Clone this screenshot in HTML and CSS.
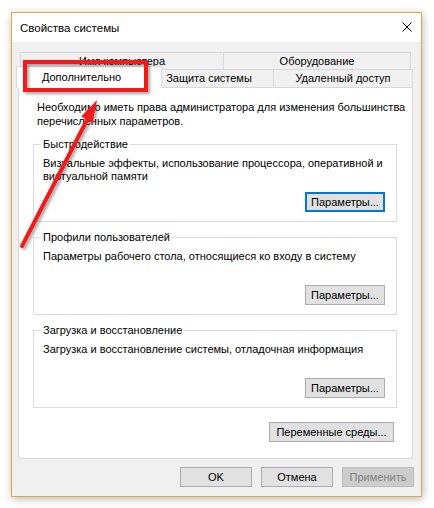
FILE: index.html
```html
<!DOCTYPE html>
<html lang="ru">
<head>
<meta charset="utf-8">
<title>Свойства системы</title>
<link rel="stylesheet" href="styles.css">
</head>
<body>
<div class="stage">
  <div class="window">
    <div class="titlebar">
      <span class="title">Свойства системы</span>
      <span class="close"><svg width="10" height="10" viewBox="0 0 10 10"><path d="M0.5 0.5L9.5 9.5M9.5 0.5L0.5 9.5" stroke="#000" stroke-width="1" fill="none"/></svg></span>
    </div>
    <div class="client">
      <div class="tabs">
        <div class="tabrow back">
          <div class="tab t-name">Имя компьютера</div>
          <div class="tab t-hw">Оборудование</div>
        </div>
        <div class="tabrow front">
          <div class="tab t-adv selected">Дополнительно</div>
          <div class="tab t-prot">Защита системы</div>
          <div class="tab t-remote">Удаленный доступ</div>
        </div>
      </div>
      <div class="panel">
        <p class="intro">Необходимо иметь права администратора для изменения большинства<br>перечисленных параметров.</p>
        <fieldset class="group">
          <legend>Быстродействие</legend>
          <p class="desc">Визуальные эффекты, использование процессора, оперативной и<br>виртуальной памяти</p>
          <div class="btnrow"><button class="btn focus">Параметры...</button></div>
        </fieldset>
        <fieldset class="group">
          <legend>Профили пользователей</legend>
          <p class="desc">Параметры рабочего стола, относящиеся ко входу в систему</p>
          <div class="btnrow"><button class="btn">Параметры...</button></div>
        </fieldset>
        <fieldset class="group">
          <legend>Загрузка и восстановление</legend>
          <p class="desc">Загрузка и восстановление системы, отладочная информация</p>
          <div class="btnrow"><button class="btn">Параметры...</button></div>
        </fieldset>
        <div class="env-row"><button class="btn env">Переменные среды...</button></div>
      </div>
      <div class="dlg-buttons">
        <button class="btn dlg">OK</button>
        <button class="btn dlg">Отмена</button>
        <button class="btn dlg disabled">Применить</button>
      </div>
    </div>
  </div>
  <svg class="annot" width="434" height="508" viewBox="0 0 434 508">
    <defs>
      <filter id="sh" x="-30%" y="-30%" width="160%" height="160%">
        <feDropShadow dx="2" dy="2" stdDeviation="1.5" flood-color="#000" flood-opacity="0.35"/>
      </filter>
    </defs>
    <g filter="url(#sh)">
      <rect x="25" y="62" width="121" height="28" fill="none" stroke="#ef1c1c" stroke-width="4"/>
      <line x1="22" y1="246" x2="88" y2="118" stroke="#ef1c1c" stroke-width="4" stroke-linecap="round"/>
      <polygon points="97,100 92.7,122.6 81.2,116.6" fill="#ef1c1c"/>
    </g>
  </svg>
</div>
</body>
</html>
```

FILE: styles.css
```css
html, body {
  margin: 0;
  background: #fff;
}
body {
  font-family: "Liberation Sans", Arial, sans-serif;
  font-size: 11px;
  color: #000;
}
.stage {
  position: relative;
  width: 434px;
  height: 508px;
  box-sizing: border-box;
  padding: 12px 0 0 11px;
  overflow: hidden;
}
.window {
  width: 411px;
  box-sizing: border-box;
  border: 1px solid #e1a83c;
  background: #f0f0f0;
  box-shadow: 1px 2px 8px rgba(0, 0, 0, 0.28);
}
.titlebar {
  height: 29px;
  background: #fff;
  display: flex;
  align-items: center;
  justify-content: space-between;
  padding: 0 9px 0 8px;
}
.title {
  font-size: 11.5px;
}
.close {
  display: flex;
  margin-top: -2px;
}
.client {
  padding: 10px 8px 9px 6px;
}
.tabrow {
  display: flex;
  align-items: flex-start;
}
.tabrow.back {
  margin: 0 2px;
  height: 17px;
}
.tabrow.front {
  height: 18px;
}
.tab {
  box-sizing: border-box;
  border: 1px solid #d9d9d9;
  border-bottom: none;
  background: #f0f0f0;
  text-align: center;
  white-space: nowrap;
}
.tab + .tab {
  margin-left: -1px;
}
.back .tab {
  height: 17px;
  line-height: 16px;
}
.front .tab {
  height: 18px;
  line-height: 17px;
}
.t-name { width: 204px; }
.t-hw { width: 188px; }
.t-prot { width: 113px; padding-right: 17px; }
.t-remote { width: 140px; }
.front .tab.selected {
  width: 146px;
  margin-left: -2px;
  margin-top: -3px;
  height: 22px;
  padding-top: 2px;
  padding-right: 15px;
  background: #fff;
  position: relative;
  z-index: 1;
}
.panel {
  background: #fff;
  border: 1px solid #d9d9d9;
  padding: 0 0 16px 0;
}
.intro {
  margin: 0;
  padding: 12px 0 0 18px;
  line-height: 14px;
  white-space: nowrap;
}
.group {
  margin: 8px 15px 0 14px;
  border: 1px solid #dcdcdc;
  padding: 0 11px 9px 9px;
  min-width: 0;
}
.intro + .group {
  margin-top: 9px;
}
.group legend {
  padding: 0 2px;
  margin-left: -2px;
  line-height: 14px;
}
.desc {
  margin: 6px 0 0;
  line-height: 13px;
  height: 26px;
  white-space: nowrap;
}
.btnrow {
  display: flex;
  justify-content: flex-end;
  margin-top: 9px;
}
.btn {
  box-sizing: border-box;
  height: 20px;
  width: 80px;
  border: 1px solid #adadad;
  background: #e1e1e1;
  font: inherit;
  color: #000;
  padding: 0;
  margin: 0;
  display: flex;
  align-items: center;
  justify-content: center;
  border-radius: 0;
}
.btn.focus {
  border: 2px solid #0078d7;
}
.env-row {
  display: flex;
  justify-content: flex-end;
  margin: 14px 18px 0 0;
}
.btn.env {
  width: 125px;
}
.dlg-buttons {
  display: flex;
  justify-content: flex-end;
  gap: 9px;
  margin: 8px -1px 0 0;
}
.btn.dlg {
  width: 72px;
}
.btn.disabled {
  background: #cccccc;
  border-color: #bfbfbf;
  color: #838383;
}
.annot {
  position: absolute;
  left: 0;
  top: 0;
  z-index: 5;
  pointer-events: none;
}
```
